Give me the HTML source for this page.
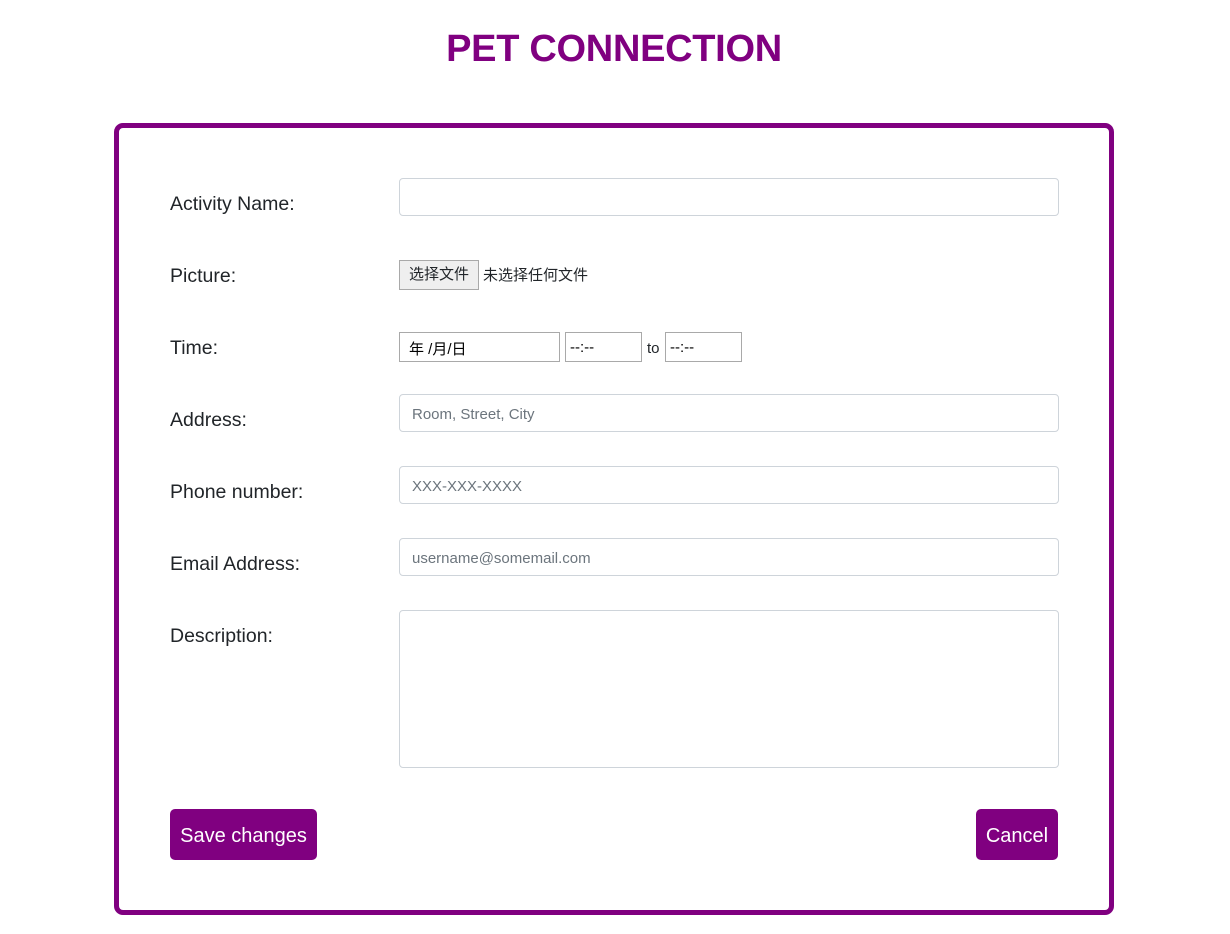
<!DOCTYPE html>
<html><head><meta charset="utf-8"><style>
body{margin:0;width:1230px;height:934px;background:#fff;font-family:"Liberation Sans","Noto Sans CJK SC",sans-serif;color:#212529;position:relative;overflow:hidden}
.a{position:absolute}
h1{position:absolute;left:0;width:1228px;top:28px;margin:0;text-align:center;font-size:38px;font-weight:bold;color:#800080;letter-spacing:-0.3px}
.box{left:114px;top:123px;width:990px;height:782px;border:5px solid #800080;border-radius:9px}
.lbl{left:170px;font-size:19.5px;color:#212529}
.in{left:399px;width:660px;height:36px;border:1px solid #ced4da;border-radius:4px;box-sizing:border-box;font-size:15px;color:#6c757d;padding:11px 12px 0}
.sm{border:1px solid #a9a9a9;box-sizing:border-box;height:30px;font-size:15px;color:#000;padding:6px 4px}
.btn{background:#800080;color:#fff;border-radius:5px;font-size:20px;height:51px;line-height:54px;text-align:center;top:809px}
</style></head><body>
<h1>PET CONNECTION</h1>
<div class="a box"></div>
<div class="a lbl" style="top:193px">Activity Name:</div>
<div class="a in" style="top:178px;height:38px"></div>
<div class="a lbl" style="top:265px">Picture:</div>
<div class="a" style="left:399px;top:260px;width:80px;height:30px;border:1px solid #a9a9a9;box-sizing:border-box;background:#efefef;font-size:15px;line-height:28px;text-align:center">选择文件</div>
<div class="a" style="left:483px;top:264px;font-size:15px">未选择任何文件</div>
<div class="a lbl" style="top:337px">Time:</div>
<div class="a sm" style="left:399px;top:332px;width:161px;padding-left:9px;padding-top:5px">年 /月/日</div>
<div class="a sm" style="left:565px;top:332px;width:77px">--:--</div>
<div class="a" style="left:647px;top:340px;font-size:15px">to</div>
<div class="a sm" style="left:665px;top:332px;width:77px">--:--</div>
<div class="a lbl" style="top:409px">Address:</div>
<div class="a in" style="top:394px;height:38px">Room, Street, City</div>
<div class="a lbl" style="top:481px">Phone number:</div>
<div class="a in" style="top:466px;height:38px">XXX-XXX-XXXX</div>
<div class="a lbl" style="top:553px">Email Address:</div>
<div class="a in" style="top:538px;height:38px">username@somemail.com</div>
<div class="a lbl" style="top:625px">Description:</div>
<div class="a in" style="top:610px;height:158px"></div>
<div class="a btn" style="left:170px;width:147px">Save changes</div>
<div class="a btn" style="left:976px;width:82px">Cancel</div>
</body></html>
